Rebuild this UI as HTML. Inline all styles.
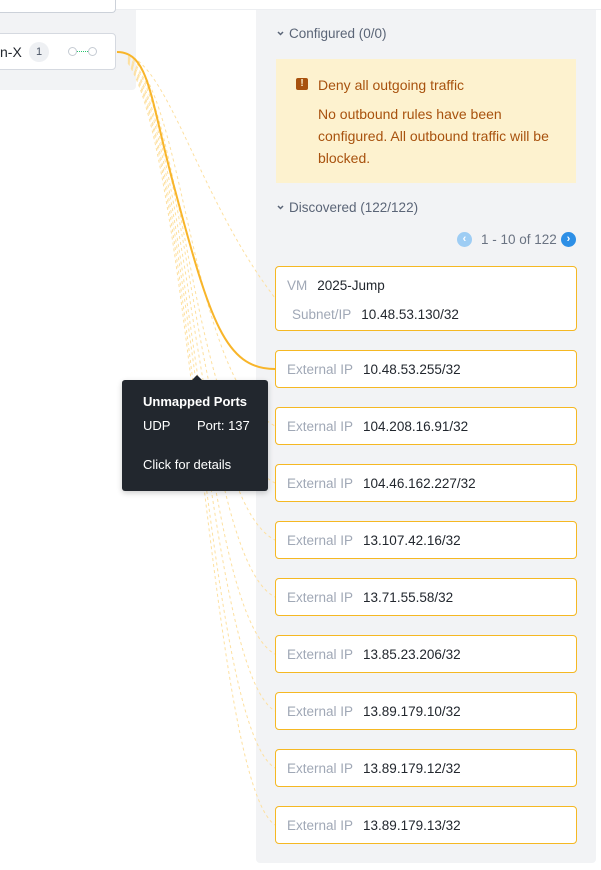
<!DOCTYPE html>
<html><head><meta charset="utf-8"><style>
*{box-sizing:border-box;margin:0;padding:0}
body{width:601px;height:870px;background:#fff;font-family:"Liberation Sans",sans-serif;position:relative;overflow:hidden;font-size:13px}
.abs{position:absolute}
.card{position:absolute;left:275px;width:302px;height:38px;border:1px solid #f5b823;border-radius:4px;background:#fff;display:flex;align-items:center;padding-left:11px;color:#22272e;font-size:13.5px}
.card .l{color:#a0a8b6;margin-right:10px}
</style></head><body>
<div class="abs" style="left:0;top:9px;width:601px;height:1px;background:#eceef1"></div>
<div class="abs" style="left:0;top:10px;width:136px;height:80px;background:#f2f3f5;border-radius:0 0 4px 0"></div>
<div class="abs" style="left:-10px;top:0;width:126px;height:13px;border:1px solid #ccd1d9;border-top:none;border-radius:0 0 4px 4px;background:#fff"></div>
<div class="abs" style="left:-10px;top:33px;width:126px;height:37px;border:1px solid #d5d9e0;border-radius:4px;background:#fff"></div>
<div class="abs" style="left:0;top:44px;font-size:14px;color:#22272e">n-X</div>
<div class="abs" style="left:29px;top:42px;width:20px;height:20px;border-radius:10px;background:#eef0f3;color:#4a5464;font-size:11px;text-align:center;line-height:20px">1</div>
<div class="abs" style="left:68px;top:47px;width:9px;height:9px;border:1px solid #c5cbd3;border-radius:5px"></div>
<div class="abs" style="left:77px;top:51px;width:11px;border-top:1.5px dotted #28c76f"></div>
<div class="abs" style="left:88px;top:47px;width:9px;height:9px;border:1px solid #c5cbd3;border-radius:5px"></div>
<div class="abs" style="left:256px;top:10px;width:340px;height:853px;background:#f2f3f5;border-radius:0 0 4px 4px"></div>
<svg class="abs" style="left:0;top:0" width="601" height="870">
<g fill="none" stroke="#fde0a0" stroke-width="1" stroke-dasharray="3 3">
<path d="M128 55 C170 70,200 200,275 298"/>
<path d="M128 56 C185 90,190 380,275 426"/>
<path d="M128 57 C185 100,190 440,275 483"/>
<path d="M128 58 C188 110,195 500,275 540"/>
<path d="M128 59 C188 120,200 560,275 597"/>
<path d="M128 60 C190 130,200 615,275 654"/>
<path d="M128 61 C190 140,205 670,275 711"/>
<path d="M128 62 C192 150,205 725,275 768"/>
<path d="M128 63 C192 160,210 780,275 825"/>
</g>
<path d="M117 52 C150 52,150 100,175 190 C210 320,225 369,275 369" fill="none" stroke="#f8b52a" stroke-width="2"/>
</svg>
<svg class="abs" style="left:277px;top:31px" width="7" height="5"><path d="M1 1L3.5 3.5L6 1" fill="none" stroke="#5b6577" stroke-width="1.5"/></svg>
<div class="abs" style="left:289px;top:26px;color:#5b6577;font-size:13.5px">Configured (0/0)</div>
<div class="abs" style="left:276px;top:59px;width:300px;height:124px;background:#fdf2cf"></div>
<div class="abs" style="left:296px;top:78px;width:12px;height:12px;background:#a8520e;border-radius:2px;color:#fdf2cf;font-size:10px;font-weight:bold;text-align:center;line-height:12px">!</div>
<div class="abs" style="left:318px;top:77px;color:#a8520e;font-size:14px">Deny all outgoing traffic</div>
<div class="abs" style="left:318px;top:103px;color:#a8520e;font-size:14px;line-height:22px;width:245px">No outbound rules have been configured. All outbound traffic will be blocked.</div>
<svg class="abs" style="left:277px;top:205px" width="7" height="5"><path d="M1 1L3.5 3.5L6 1" fill="none" stroke="#5b6577" stroke-width="1.5"/></svg>
<div class="abs" style="left:289px;top:200px;color:#5b6577;font-size:13.5px">Discovered (122/122)</div>
<div class="abs" style="left:457px;top:232px;width:15px;height:15px;border-radius:8px;background:#9ecdf4;color:#fff;font-size:11px;font-weight:bold;text-align:center;line-height:14px">‹</div>
<div class="abs" style="left:481px;top:232px;color:#6a7382;font-size:13.5px">1 - 10 of 122</div>
<div class="abs" style="left:561px;top:232px;width:15px;height:15px;border-radius:8px;background:#2d8fe6;color:#fff;font-size:11px;font-weight:bold;text-align:center;line-height:14px">›</div>
<div class="card" style="top:266px;height:65px;display:block;padding-top:11px"><div><span class="l">VM</span>2025-Jump</div><div style="margin-top:14px;padding-left:5px"><span class="l">Subnet/IP</span>10.48.53.130/32</div></div>
<div class="card" style="top:350px"><span class="l">External IP</span>10.48.53.255/32</div>
<div class="card" style="top:407px"><span class="l">External IP</span>104.208.16.91/32</div>
<div class="card" style="top:464px"><span class="l">External IP</span>104.46.162.227/32</div>
<div class="card" style="top:521px"><span class="l">External IP</span>13.107.42.16/32</div>
<div class="card" style="top:578px"><span class="l">External IP</span>13.71.55.58/32</div>
<div class="card" style="top:635px"><span class="l">External IP</span>13.85.23.206/32</div>
<div class="card" style="top:692px"><span class="l">External IP</span>13.89.179.10/32</div>
<div class="card" style="top:749px"><span class="l">External IP</span>13.89.179.12/32</div>
<div class="card" style="top:806px"><span class="l">External IP</span>13.89.179.13/32</div>
<div class="abs" style="left:191px;top:375px;width:0;height:0;border-left:6px solid transparent;border-right:6px solid transparent;border-bottom:6px solid #22272e"></div>
<div class="abs" style="left:122px;top:380px;width:146px;height:111px;background:#22272e;border-radius:3px;box-shadow:0 2px 6px rgba(0,0,0,.2);color:#fff;font-size:13px">
<div class="abs" style="left:21px;top:14px;font-weight:bold">Unmapped Ports</div>
<div class="abs" style="left:21px;top:38px">UDP</div>
<div class="abs" style="left:75px;top:38px">Port: 137</div>
<div class="abs" style="left:21px;top:77px">Click for details</div>
</div>
</body></html>
